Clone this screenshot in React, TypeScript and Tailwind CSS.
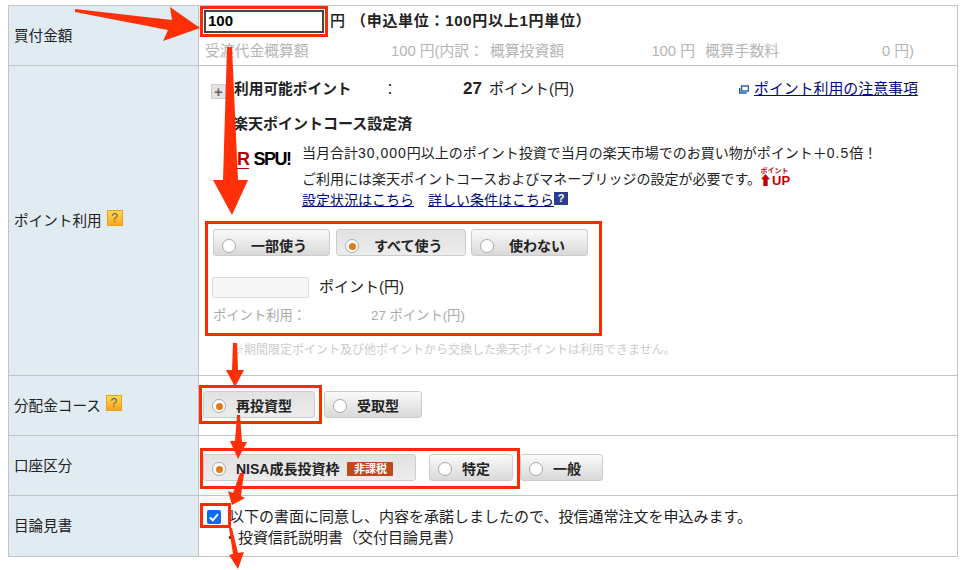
import React from "react";

const Help = ({ className = "" }: { className?: string }) => (
  <span className={`inline-flex h-4 w-4 items-center justify-center border border-[#e8a020] bg-linear-to-b from-[#ffd84a] to-[#f9a51a] text-[12px] leading-none text-[#55606a] ${className}`}>
    ?
  </span>
);

const Radio = ({ on = false }: { on?: boolean }) => (
  <span className="flex h-[14px] w-[14px] shrink-0 items-center justify-center rounded-full border border-[#aaa] bg-white">
    {on && <span className="h-[7px] w-[7px] rounded-full bg-[#e47911]" />}
  </span>
);

const RadioButton = ({
  label,
  on = false,
  className = "",
  inner = "gap-[15px] pt-[7px]",
  children,
}: {
  label: string;
  on?: boolean;
  className?: string;
  inner?: string;
  children?: React.ReactNode;
}) => (
  <div
    className={`flex h-[27px] items-center ${inner} rounded-[3px] border border-[#ccc] pl-[8px] text-[14px] font-bold text-[#222] ${
      on ? "bg-linear-to-b from-[#e2e2e2] to-[#ececec]" : "bg-linear-to-b from-[#fafafa] to-[#d9d9d9]"
    } ${className}`}
  >
    <Radio on={on} />
    <span>{label}</span>
    {children}
  </div>
);

const Row = ({
  label,
  height,
  help,
  children,
  last,
}: {
  label: string;
  height: string;
  help?: boolean;
  children: React.ReactNode;
  last?: boolean;
}) => (
  <div className={`grid grid-cols-[190px_1fr] ${height} ${last ? "" : "border-b border-[#c4c4c4]"}`}>
    <div className="flex items-center gap-[5px] border-r border-[#c4c4c4] bg-[#e1ebf2] pl-[5px] pt-[2px] text-[14.6px] text-[#222]">
      {label}
      {help && <Help className="mb-[7px]" />}
    </div>
    <div>{children}</div>
  </div>
);

// red annotation frames and arrows drawn on top of the form
const Frame = ({ className }: { className: string }) => (
  <div className={`absolute border-[3px] border-[#ff2a00] ${className}`} />
);

const Arrows = () => (
  <svg className="pointer-events-none absolute left-0 top-0" width="969" height="570" fill="#ff3008">
    <polygon points="75,9 172,20 170,7 200,28 163,41 168,30 75,12" />
    <polygon points="227,47 232,47 238,180 248,180 232,215 213,180 223,180" />
    <polygon points="233,343 237,343 238,370 244,370 235,387 226,370 232,370" />
    <polygon points="237,415 240,415 242,442 247,442 238,459 230,441 235,441" />
    <polygon points="240,473 244,473 241,496 245,498 232,505 228,491 233,493" />
    <polygon points="229,528 232,528 238,553 244,552 238,569 229,555 233,554" />
  </svg>
);

export default function App() {
  return (
    <div className="relative h-[570px] w-[969px] overflow-hidden bg-white pl-2 pt-[5px] font-['Liberation_Sans','Noto_Sans_CJK_JP',sans-serif] text-[14px] text-[#222]">
      <div className="w-[950px] border border-[#c4c4c4]">
        <Row label="買付金額" height="h-[60px]">
          <div className="flex items-center pl-[5px] pt-[4px]">
            <div className="flex h-[23px] w-[120px] items-center border-2 border-[#444] bg-white pl-[2px] text-[15px] font-bold text-black">100</div>
            <span className="ml-[6px] text-[15px] font-medium">円</span>
            <span className="ml-[6px] text-[15px] font-bold tracking-[0.7px]">（申込単位：100円以上1円単位）</span>
          </div>
          <div className="mt-[7px] flex pl-[6px] text-[14.8px] leading-[22px] text-[#b5b5b5]">
            <span className="w-[186px]">受渡代金概算額</span>
            <span className="w-[99px] whitespace-nowrap">100 円(内訳：</span>
            <span className="w-[75px] whitespace-nowrap">概算投資額</span>
            <span className="w-[130px] text-right">100 円</span>
            <span className="ml-[10px] w-[75px] whitespace-nowrap">概算手数料</span>
            <span className="w-[134px] text-right">0 円)</span>
          </div>
        </Row>

        <Row label="ポイント利用" height="h-[310px]" help>
          <div className="pl-[12px] pt-[12px]">
            <div className="flex h-[22px] items-center">
              <span className="mt-[5px] flex h-[15px] w-[15px] items-center justify-center border border-[#ccc] bg-[#e4e4e4] text-[15px] font-bold leading-none text-[#666]">+</span>
              <span className="ml-[8px] w-[149px] whitespace-nowrap text-[14.7px] font-bold">利用可能ポイント</span>
              <span className="w-[80px]">：</span>
              <span className="w-[26px] text-[17px] font-bold">27</span>
              <span className="text-[15px]">ポイント(円)</span>
              <span className="ml-[165px] flex items-center gap-[5px] whitespace-nowrap text-[14.9px] text-[#000a80] underline">
                <svg width="10" height="9" viewBox="0 0 10 9" fill="none" stroke="#1a5fa8" strokeWidth="1.4">
                  <rect x="2.5" y="1" width="7" height="5" />
                  <path d="M0.7 3v5h7" />
                </svg>
                ポイント利用の注意事項
              </span>
            </div>
            <div className="ml-[22px] mt-[13px] text-[15px] font-bold leading-[22px]">楽天ポイントコース設定済</div>
            <div className="mt-[5px] flex">
              <div className="ml-[26px] mt-[7px] flex h-[24px] w-[65px] items-center text-[18px] font-bold tracking-[-1.5px]">
                <span className="border-b border-[#bf0000] leading-[18px] text-[#bf0000]">R</span>
                <span className="ml-[5px] text-black">SPU!</span>
              </div>
              <div className="text-[14px]">
                <div className="flex h-[26px] items-center">
                  当月合計<span className="tracking-[1px]">30,000</span>円以上のポイント投資で当月の楽天市場でのお買い物がポイント＋<span className="tracking-[1px]">0.5</span>倍！
                </div>
                <div className="flex h-[26px] items-center">
                  ご利用には楽天ポイントコースおよびマネーブリッジの設定が必要です。
                  <span className="mb-[4px] -ml-[2px] flex flex-col items-center font-bold leading-none text-[#bf0000]">
                    <span className="text-[7px]">ポイント</span>
                    <span className="text-[13px]">⬆UP</span>
                  </span>
                </div>
                <div className="flex h-[16px] items-center text-[#000a80]">
                  <span className="underline">設定状況はこちら</span>
                  <span className="ml-[14px] underline">詳しい条件はこちら</span>
                  <span className="mb-[4px] flex h-[13px] w-[14px] items-center justify-center bg-[#2b3f8f] text-[11px] font-bold leading-none text-white">?</span>
                </div>
              </div>
            </div>
            <div className="mt-[21px] flex pl-[2px]">
              <RadioButton label="一部使う" className="w-[117px]" />
              <RadioButton label="すべて使う" on className="ml-[6px] w-[130px]" />
              <RadioButton label="使わない" className="ml-[5px] w-[117px]" />
            </div>
            <div className="ml-[1px] mt-[20px] flex items-center">
              <div className="h-[21px] w-[97px] rounded-[2px] border border-[#ddd] bg-[#f7f7f7]" />
              <span className="ml-[10px] text-[15px]">ポイント(円)</span>
            </div>
            <div className="mt-[6px] flex pl-[2px] text-[13.3px] leading-[22px] text-[#aaa]">
              <span className="w-[158px]">ポイント利用：</span>
              <span>27 ポイント(円)</span>
            </div>
            <div className="ml-[21px] mt-[12px] text-[12px] leading-[22px] text-[#ccc]">※期間限定ポイント及び他ポイントから交換した楽天ポイントは利用できません。</div>
          </div>
        </Row>

        <Row label="分配金コース" height="h-[60px]" help>
          <div className="flex pl-[4px] pt-[15px]">
            <RadioButton label="再投資型" on className="w-[112px]" inner="gap-[10px] pt-[3px]" />
            <RadioButton label="受取型" className="ml-[9px] w-[98px]" inner="gap-[10px] pt-[3px]" />
          </div>
        </Row>

        <Row label="口座区分" height="h-[60px]">
          <div className="flex pl-[4px] pt-[18px]">
            <RadioButton label="NISA成長投資枠" on className="w-[213px]" inner="gap-[10px] pt-[3px]">
              <span className="-ml-[2px] flex h-[14px] w-[46px] items-center justify-center rounded-[1px] bg-[#c0481c] text-[11px] font-bold text-white">非課税</span>
            </RadioButton>
            <RadioButton label="特定" className="ml-[13px] w-[84px]" inner="gap-[10px] pt-[3px]" />
            <RadioButton label="一般" className="ml-[7px] w-[83px]" inner="gap-[10px] pt-[3px]" />
          </div>
        </Row>

        <Row label="目論見書" height="h-[60px]" last>
          <div className="flex pl-[8px] pt-[10px]">
            <div className="mt-[4px] flex h-[14px] w-[14px] items-center justify-center rounded-[2px] bg-[#0a6cf5]">
              <svg width="10" height="9" viewBox="0 0 10 9" fill="none" stroke="white" strokeWidth="2">
                <path d="M1 4.5l2.8 2.8L9 1.2" />
              </svg>
            </div>
            <div className="ml-[8px] text-[15px] leading-[21px]">
              <div>以下の書面に同意し、内容を承諾しましたので、投信通常注文を申込みます。</div>
              <div className="-ml-[6px]">・投資信託説明書（交付目論見書）</div>
            </div>
          </div>
        </Row>
      </div>

      <Frame className="left-[200px] top-[6px] h-[31px] w-[128px]" />
      <Frame className="left-[205px] top-[221px] h-[115px] w-[397px]" />
      <Frame className="left-[199px] top-[385px] h-[39px] w-[123px]" />
      <Frame className="left-[200px] top-[448px] h-[41px] w-[320px]" />
      <Frame className="left-[200px] top-[503px] h-[25px] w-[31px]" />
      <Arrows />
    </div>
  );
}
